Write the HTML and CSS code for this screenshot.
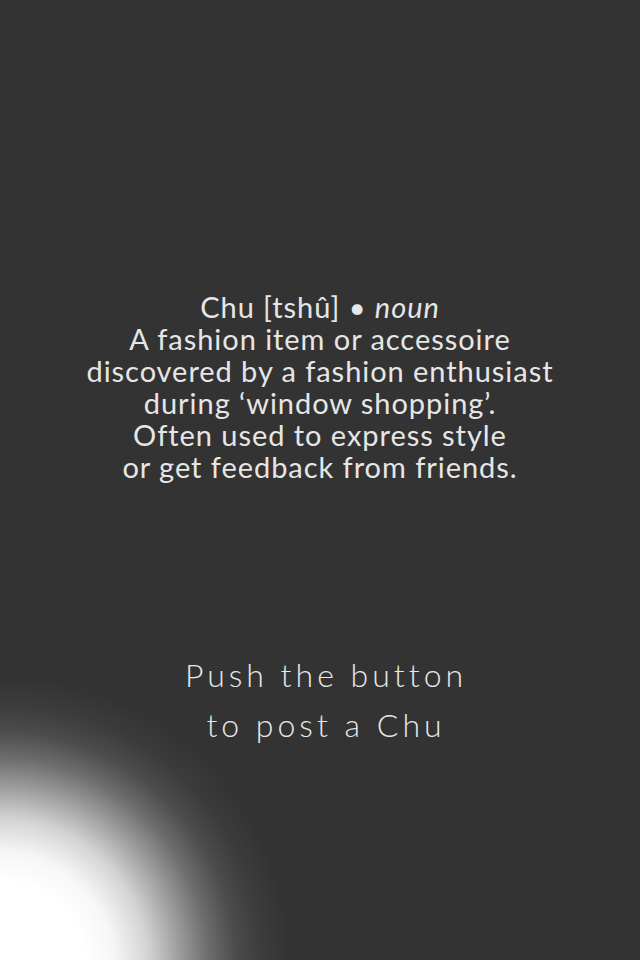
FILE: index.html
```html
<!DOCTYPE html>
<html lang="en">
<head>
<meta charset="utf-8">
<title>Chu</title>
<link rel="stylesheet" href="styles.css">
</head>
<body>
<main class="screen">
  <section class="definition">
    <p class="term">Chu [tshû] • <em>noun</em></p>
    <p>A fashion item or accessoire</p>
    <p>discovered by a fashion enthusiast</p>
    <p>during ‘window shopping’.</p>
    <p>Often used to express style</p>
    <p>or get feedback from friends.</p>
  </section>
  <section class="prompt">
    <p>Push the button</p>
    <p>to post a Chu</p>
  </section>
</main>
</body>
</html>
```
FILE: styles.css
```css
html, body {
  margin: 0;
  padding: 0;
}
body {
  width: 640px;
  height: 960px;
  overflow: hidden;
  background-color: #333333;
  background-image: radial-gradient(circle at 0 967px,
    #ffffff 0px,
    #ffffff 85px,
    #f6f6f6 115px,
    #d4d4d4 148px,
    #a0a0a0 178px,
    #6e6e6e 208px,
    #4c4c4c 236px,
    #3c3c3c 262px,
    #333333 292px);
  background-repeat: no-repeat;
}
.screen {
  display: flex;
  flex-direction: column;
  align-items: center;
  height: 960px;
  box-sizing: border-box;
  padding-top: 291px;
}
.definition {
  font-family: "Lato", "Open Sans", sans-serif;
  font-weight: 400;
  font-size: 29px;
  line-height: 32px;
  letter-spacing: 0.95px;
  color: #e6e6e6;
  text-align: center;
}
.definition p {
  margin: 0;
}
.definition em {
  font-style: italic;
}
.prompt {
  margin-top: 167px;
  padding-left: 12px;
  font-family: "Lato", sans-serif;
  font-weight: 300;
  font-size: 32px;
  line-height: 50px;
  letter-spacing: 4px;
  color: #e8e8e8;
  text-align: center;
}
.prompt p {
  margin: 0;
}
```
